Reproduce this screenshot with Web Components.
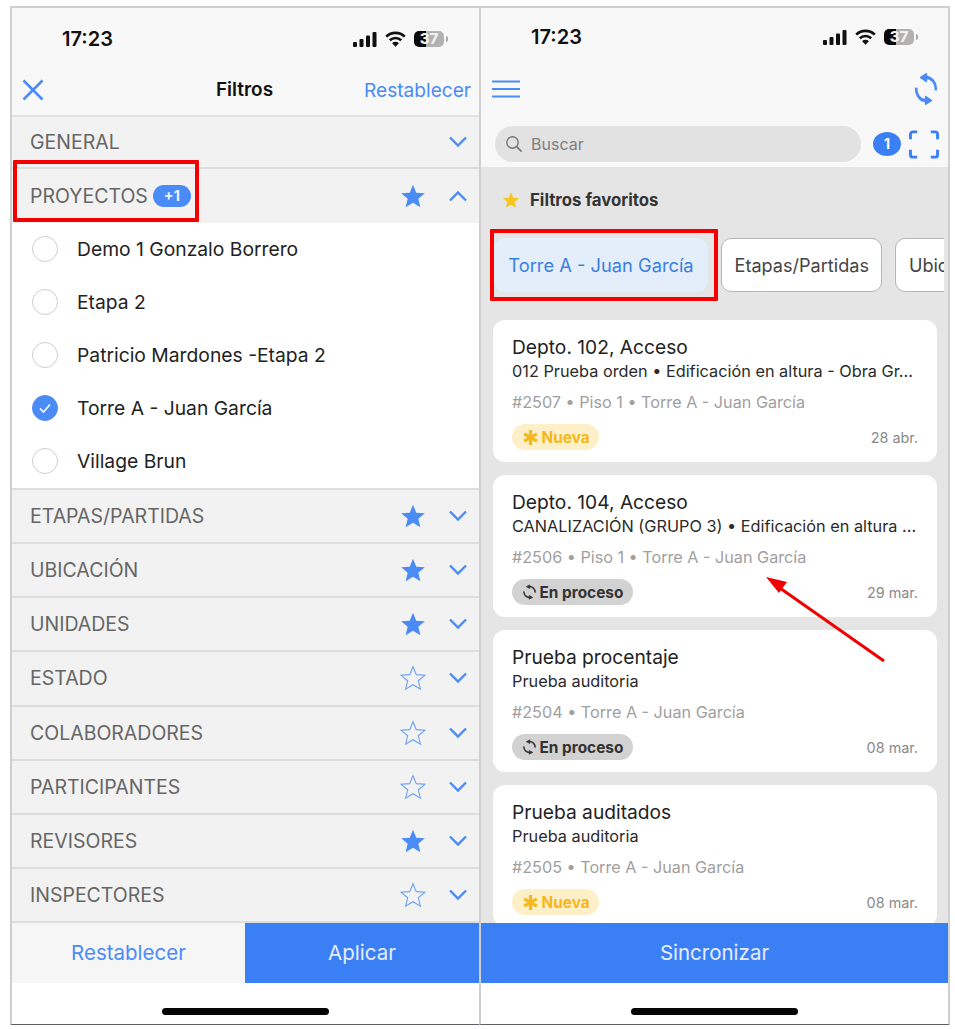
<!DOCTYPE html>
<html lang="es">
<head>
<meta charset="utf-8">
<title>Filtros</title>
<style>
html, body { margin: 0; background: #fff; }
body { font-family: Inter, "Liberation Sans", sans-serif; }
app-shot { width: 955px; height: 1029px; }
</style>
</head>
<body>
<app-shot>
  <phone-screen slot="left">
    <status-bar slot="status"></status-bar>
    <filters-nav slot="top"></filters-nav>
    <filter-row label="GENERAL" nostar></filter-row>
    <filter-row label="PROYECTOS" badge="+1" star="full" open></filter-row>
    <project-option>Demo 1 Gonzalo Borrero</project-option>
    <project-option>Etapa 2</project-option>
    <project-option>Patricio Mardones -Etapa 2</project-option>
    <project-option checked>Torre A - Juan García</project-option>
    <project-option last>Village Brun</project-option>
    <filter-row label="ETAPAS/PARTIDAS" star="full"></filter-row>
    <filter-row label="UBICACIÓN" star="full"></filter-row>
    <filter-row label="UNIDADES" star="full"></filter-row>
    <filter-row label="ESTADO" star="empty"></filter-row>
    <filter-row label="COLABORADORES" star="empty"></filter-row>
    <filter-row label="PARTICIPANTES" star="empty"></filter-row>
    <filter-row label="REVISORES" star="full"></filter-row>
    <filter-row label="INSPECTORES" star="empty"></filter-row>
    <bottom-action slot="bottom" secondary="Restablecer" primary="Aplicar"></bottom-action>
  </phone-screen>
  <phone-screen slot="right" tinted>
    <status-bar slot="status" up></status-bar>
    <tasks-header slot="top"></tasks-header>
    <favorite-filters>
      <filter-chip active>Torre A - Juan García</filter-chip>
      <filter-chip>Etapas/Partidas</filter-chip>
      <filter-chip>Ubicación</filter-chip>
    </favorite-filters>
    <task-list>
      <task-card title="Depto. 102, Acceso" sub="012 Prueba orden • Edificación en altura - Obra Gr..." meta="#2507 • Piso 1 • Torre A - Juan García" state="new" date="28 abr."></task-card>
      <task-card title="Depto. 104, Acceso" sub="CANALIZACIÓN (GRUPO 3) • Edificación en altura ..." meta="#2506 • Piso 1 • Torre A - Juan García" state="progress" date="29 mar."></task-card>
      <task-card title="Prueba procentaje" sub="Prueba auditoria" meta="#2504 • Torre A - Juan García" state="progress" date="08 mar."></task-card>
      <task-card title="Prueba auditados" sub="Prueba auditoria" meta="#2505 • Torre A - Juan García" state="new" date="08 mar."></task-card>
    </task-list>
    <bottom-action slot="bottom" primary="Sincronizar"></bottom-action>
  </phone-screen>
</app-shot>

<script>
const BLUE = '#4a8bf5';
const STAR = '12,1.6 15,8.9 22.9,9.5 16.9,14.6 18.8,22.3 12,18.2 5.2,22.3 7.1,14.6 1.1,9.5 9,8.9';
// two counter-clockwise arcs, heads pointing left at the top and right at the bottom
const SYNC = '<path d="M21 13A9 9 0 0 0 11 3.300M3 11A9 9 0 0 0 13 20.700" fill="none" stroke="currentColor" stroke-width="2.400"/><path d="M12.500 .6L7 3.400l5.500 3zM11.500 23.400l5.500-2.800-5.500-3z" fill="currentColor" stroke="currentColor" stroke-width="1.200" stroke-linejoin="round"/>';

function define(name, css, render) {
  customElements.define(name, class extends HTMLElement {
    connectedCallback() {
      if (this.shadowRoot) return;
      this.attachShadow({ mode: 'open' });
      this.shadowRoot.innerHTML = `<style>${css}</style>${render(this)}`;
    }
  });
}

define('app-shot', `
  :host { display: block; position: relative; overflow: hidden; box-sizing: border-box; padding: 6px 5px 0 10px; }
  .pair { display: grid; grid-template-columns: 469px 471px; height: 1019px; }
  .mark { position: absolute; border: 4px solid #f50000; box-sizing: border-box; border-radius: 1px; }
  .one { left: 13px; top: 160px; width: 186px; height: 62px; }
  .two { left: 490px; top: 229px; width: 228px; height: 72px; }
  svg { position: absolute; left: 755px; top: 565px; }
`, () => `
  <div class="pair"><slot name="left"></slot><slot name="right"></slot></div>
  <div class="mark one"></div>
  <div class="mark two"></div>
  <svg width="140" height="105" viewBox="0 0 140 105">
    <path d="M129 96L22 21" stroke="#f00000" stroke-width="3" fill="none"/>
    <path d="M11 12L32 17L24 28Z" fill="#f00000"/>
  </svg>`);

define('phone-screen', `
  :host { display: flex; flex-direction: column; box-sizing: border-box; height: 1019px; border: 2px solid #cfcfcf; border-bottom: 1px solid #5c5f66; background: #fff; overflow: hidden; }
  :host([slot=left]) { border-right: 0; }
  .head { background: #f8f8f8; flex: none; }
  .body { flex: 1; min-height: 0; background: #f2f2f2; overflow: hidden; display: flex; flex-direction: column; }
  :host([tinted]) .body { background: #e5e5e5; }
  .foot { flex: none; height: 41px; }
  .foot i { display: block; width: 167px; height: 7px; border-radius: 4px; background: #050505; margin: 25px auto 0; }
  .bottom { flex: none; }
`, () => `
  <div class="head"><slot name="status"></slot><slot name="top"></slot></div>
  <div class="body"><slot></slot></div>
  <div class="bottom"><slot name="bottom"></slot></div>
  <div class="foot"><i></i></div>`);

define('status-bar', `
  :host { display: flex; align-items: center; box-sizing: border-box; height: 56px; padding: 6px 31px 0 50px; color: #111; }
  :host([up]) { height: 54px; padding: 4px 30px 0 50px; }
  .time { font: 600 20px/1 Inter, "Liberation Sans", sans-serif; margin-right: auto; }
  .icons { display: flex; align-items: center; gap: 8px; }
  .bat { width: 30px; height: 16px; border-radius: 5px; background: linear-gradient(90deg, #0a0a0a 40%, #b2b2b2 40%); font: 800 15px/16px Inter, "Liberation Sans", sans-serif; color: #f0f0f0; text-align: center; }
  .nub { width: 2px; height: 6px; background: #aaa; margin-left: -6px; border-radius: 0 2px 2px 0; }
`, () => `
  <span class="time">17:23</span>
  <span class="icons">
    <svg width="24" height="15" viewBox="0 0 24 15"><g fill="#111"><rect x="0" y="10" width="4" height="5" rx="1"/><rect x="6.500" y="7" width="4" height="8" rx="1"/><rect x="13" y="3.500" width="4" height="11.500" rx="1"/><rect x="19.500" y="0" width="4" height="15" rx="1"/></g></svg>
    <svg width="21" height="16" viewBox="0 0 21 16"><g fill="none" stroke="#111" stroke-width="2.600"><path d="M1.200 5.600a13.500 13.500 0 0 1 18.600 0"/><path d="M4.800 9.200a8.400 8.400 0 0 1 11.400 0"/></g><path d="M10.500 15.800l-3.400-3.600a4.800 4.800 0 0 1 6.800 0z" fill="#111"/></svg>
    <span class="bat">37</span><span class="nub"></span>
  </span>`);

define('filters-nav', `
  :host { display: flex; align-items: center; height: 51px; padding: 0 8px 0 10px; position: relative; border-bottom: 2px solid #e2e2e2; }
  .title { position: absolute; left: 0; right: 2px; text-align: center; font-weight: 600; font-size: 19px; color: #111; }
  .reset { margin-left: auto; color: ${BLUE}; font-size: 19.100px; position: relative; }
  svg { position: relative; }
`, () => `
  <svg width="22" height="22" viewBox="0 0 22 22"><path d="M1.500 1.500l19 19M20.500 1.500l-19 19" stroke="${BLUE}" stroke-width="2.600" fill="none"/></svg>
  <span class="title">Filtros</span>
  <span class="reset">Restablecer</span>`);

define('filter-row', `
  :host { display: flex; flex: none; align-items: center; box-sizing: border-box; height: 54.125px; padding: 0 11px 0 18px; background: #f2f2f2; border-bottom: 2px solid #dedede; color: #666; font-size: 19.500px; }
  :host([label=GENERAL]) { height: 52px; }
  :host([open]) { border-bottom: 0; height: 54px; }
  .badge { margin-left: 5px; width: 38px; height: 22px; border-radius: 11px; background: ${BLUE}; color: #e8f0ff; font-weight: 700; font-size: 14.500px; line-height: 22px; text-align: center; }
  .star { margin-left: auto; width: 26px; height: 26px; }
  .chev { width: 20px; height: 12px; margin-left: 22px; }
  :host([nostar]) .chev { margin-left: auto; }
`, el => {
  const star = el.getAttribute('star');
  return `
  <span>${el.getAttribute('label')}</span>
  ${el.hasAttribute('badge') ? `<span class="badge">${el.getAttribute('badge')}</span>` : ''}
  ${star ? `<svg class="star" viewBox="0 0 24 24"><polygon points="${STAR}" ${star === 'full' ? `fill="${BLUE}"` : `fill="none" stroke="${BLUE}" stroke-width="1" stroke-opacity=".8"`}/></svg>` : ''}
  <svg class="chev" viewBox="0 0 20 12"><path d="${el.hasAttribute('open') ? 'M2 10.500l8-8 8 8' : 'M2 1.500l8 8 8-8'}" fill="none" stroke="${BLUE}" stroke-width="2.400"/></svg>`;
});

define('project-option', `
  :host { display: flex; flex: none; align-items: center; gap: 19px; box-sizing: content-box; height: 52px; padding: 0 0 1px 20px; background: #fff; color: #222; font-size: 19.300px; }
  :host([last]) { border-bottom: 2px solid #dedede; }
  .dot { width: 26px; height: 26px; box-sizing: border-box; border-radius: 50%; border: 1.500px solid #cfcfcf; flex: none; display: grid; place-items: center; }
  :host([checked]) .dot { background: ${BLUE}; border-color: ${BLUE}; }
`, el => `
  <span class="dot">${el.hasAttribute('checked') ? '<svg width="14" height="12" viewBox="0 0 14 12"><path d="M2 6.500l3.500 3.500L12 2.500" fill="none" stroke="#fff" stroke-width="1.600"/></svg>' : ''}</span>
  <span><slot></slot></span>`);

define('bottom-action', `
  :host { display: flex; height: 60px; font-size: 20.500px; }
  div { display: grid; place-items: center; box-sizing: border-box; padding-bottom: 2px; }
  .sec { width: 233px; flex: none; background: #f6f6f6; color: ${BLUE}; }
  .pri { flex: 1; background: #3b7ff5; color: #e4eeff; }
`, el => `
  ${el.hasAttribute('secondary') ? `<div class="sec">${el.getAttribute('secondary')}</div>` : ''}
  <div class="pri">${el.getAttribute('primary')}</div>`);

define('tasks-header', `
  :host { display: block; height: 105px; box-sizing: border-box; padding: 0 9px 0 10px; }
  .top { display: flex; justify-content: space-between; align-items: center; height: 54px; }
  .search { display: flex; align-items: center; height: 36px; margin-top: 10px; }
  .box { display: flex; align-items: center; gap: 8px; width: 366px; height: 36px; margin-left: 4px; padding-left: 10px; box-sizing: border-box; border-radius: 18px; background: #e2e2e2; color: #7e7e7e; font-size: 16px; }
  .count { width: 28px; height: 24px; margin-left: 12px; border-radius: 50%; background: #3b7ff5; color: #fff; font: 700 14px/24px Inter, "Liberation Sans", sans-serif; text-align: center; }
  .scan { margin-left: 8px; }
`, () => `
  <div class="top">
    <svg width="30" height="20" viewBox="0 0 30 20"><path d="M1 2.500h28M1 10h28M1 17.500h28" stroke="${BLUE}" stroke-width="2"/></svg>
    <svg width="26" height="32" viewBox="0 0 24 24" style="color:${BLUE}" preserveAspectRatio="none">${SYNC}</svg>
  </div>
  <div class="search">
    <div class="box">
      <svg width="18" height="18" viewBox="0 0 18 18"><circle cx="7.500" cy="7.500" r="5.700" fill="none" stroke="#777" stroke-width="1.400"/><path d="M11.600 11.600l5 5" stroke="#777" stroke-width="1.600"/></svg>
      <span>Buscar</span>
    </div>
    <span class="count">1</span>
    <svg class="scan" width="30" height="29" viewBox="0 0 31 29"><path d="M1.500 9V4a2.500 2.500 0 0 1 2.500-2.500h4.500M22.500 1.500h4.500A2.500 2.500 0 0 1 29.500 4v5M29.500 20v5a2.500 2.500 0 0 1-2.500 2.500h-4.500M8.500 27.500H4A2.500 2.500 0 0 1 1.500 25v-5" fill="none" stroke="#3b7ff5" stroke-width="3"/></svg>
  </div>`);

define('favorite-filters', `
  :host { display: block; flex: none; padding: 0 4px 0 13px; }
  .label { display: flex; align-items: center; gap: 10px; height: 66px; padding-left: 8px; padding-bottom: 5px; font-weight: 700; font-size: 16.800px; color: #333; }
  .chips { display: flex; gap: 13px; overflow: hidden; height: 54px; }
`, () => `
  <div class="label">
    <svg width="18" height="18" viewBox="0 0 24 24"><polygon points="${STAR}" fill="#f7c51e"/></svg>
    <span>Filtros favoritos</span>
  </div>
  <div class="chips"><slot></slot></div>`);

define('filter-chip', `
  :host { display: flex; align-items: center; flex: none; box-sizing: border-box; height: 54px; padding: 0 12.500px; border-radius: 10px; border: 1.500px solid #b5b5b5; background: #fff; color: #444; font-size: 18.100px; }
  :host([active]) { width: 214px; justify-content: center; padding: 0; border-color: #e4edfa; background: #e4edfa; color: #3a7fe0; font-size: 18.300px; }
`, () => `<slot></slot>`);

define('task-list', `
  :host { display: flex; flex-direction: column; gap: 13px; flex: 1; min-height: 0; padding: 28px 11px 0 12px; overflow: hidden; }
`, () => `<slot></slot>`);

define('task-card', `
  :host { display: block; flex: none; box-sizing: border-box; height: 142px; padding: 14px 19px 0; border-radius: 12px; background: #fff; }
  .title { font-size: 19.200px; line-height: 26px; color: #222; }
  .sub { font-size: 16.300px; line-height: 22px; color: #2a2a2a; white-space: nowrap; }
  .meta { font-size: 16.200px; line-height: 20px; margin-top: 10px; color: #a0a0a0; white-space: nowrap; }
  .row { display: flex; justify-content: space-between; align-items: center; margin-top: 12px; }
  .badge { display: flex; align-items: center; gap: 3px; height: 26px; padding: 0 9.500px; border-radius: 13px; font-weight: 700; font-size: 15.400px; }
  .new { background: #fdf0c8; color: #f5b81c; }
  .progress { background: #d2d2d2; color: #333; }
  .date { font-size: 14.400px; color: #8a8a8a; }
`, el => {
  const isNew = el.getAttribute('state') === 'new';
  return `
  <div class="title">${el.getAttribute('title')}</div>
  <div class="sub">${el.getAttribute('sub')}</div>
  <div class="meta">${el.getAttribute('meta')}</div>
  <div class="row">
    <span class="badge ${isNew ? 'new' : 'progress'}">
      ${isNew
        ? '<svg width="17" height="17" viewBox="0 0 16 16"><path d="M8 1v14M2 4.500l12 7M14 4.500l-12 7" stroke="#f5b81c" stroke-width="3"/></svg>'
        : `<svg width="15" height="16" viewBox="0 0 24 24" style="color:#333">${SYNC}</svg>`}
      <span>${isNew ? 'Nueva' : 'En proceso'}</span>
    </span>
    <span class="date">${el.getAttribute('date')}</span>
  </div>`;
});
</script>
</body>
</html>
